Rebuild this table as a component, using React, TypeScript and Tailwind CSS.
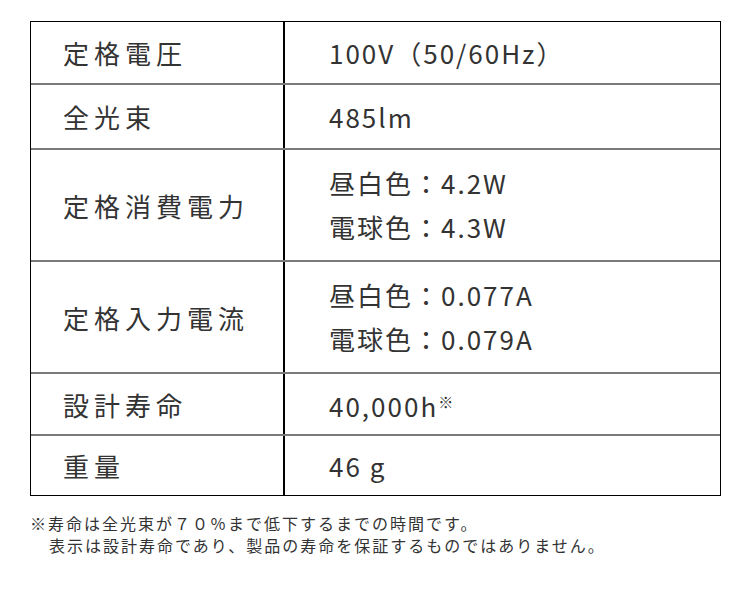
const rows: { label: string; values: string[]; h: string; note?: boolean }[] = [
  { label: "定格電圧", values: ["100V（50/60Hz）"], h: "h-[61px]" },
  { label: "全光束", values: ["485lm"], h: "h-[65px] border-t-2" },
  { label: "定格消費電力", values: ["昼白色：4.2W", "電球色：4.3W"], h: "h-[112px] border-t-2" },
  { label: "定格入力電流", values: ["昼白色：0.077A", "電球色：0.079A"], h: "h-[112px] border-t-2" },
  { label: "設計寿命", values: ["40,000h"], h: "h-[62px] border-t-2", note: true },
  { label: "重量", values: ["46 g"], h: "h-[61px] border-t-2" },
];

export default function App() {
  return (
    <div className="w-[750px] h-[590px] bg-white text-[#333] font-['Noto_Sans_CJK_JP','Noto_Sans',sans-serif]">
      <div className="pt-[21px] pl-[30px]">
        {/* spec table */}
        <div className="w-[691px] border border-black">
          {rows.map((r) => (
            <div key={r.label} className={`grid grid-cols-[254px_1fr] border-[#7a7a7a] ${r.h}`}>
              <div className="flex items-center pl-[32px] border-r-2 border-black text-[26px] tracking-[5px]">
                {r.label}
              </div>
              <div className="flex flex-col justify-center gap-[10px] pl-[44px] text-[26px] tracking-[2px] leading-[34px]">
                {r.values.map((v) => (
                  <div key={v}>
                    {v}
                    {r.note && <span className="text-[15px] tracking-normal align-[9px]">※</span>}
                  </div>
                ))}
              </div>
            </div>
          ))}
        </div>

        {/* footnote */}
        <div className="mt-[16px] text-[16px] leading-[22px] tracking-[2px]">
          <p>※寿命は全光束が７０％まで低下するまでの時間です。</p>
          <p className="pl-[19px]">表示は設計寿命であり、製品の寿命を保証するものではありません。</p>
        </div>
      </div>
    </div>
  );
}
